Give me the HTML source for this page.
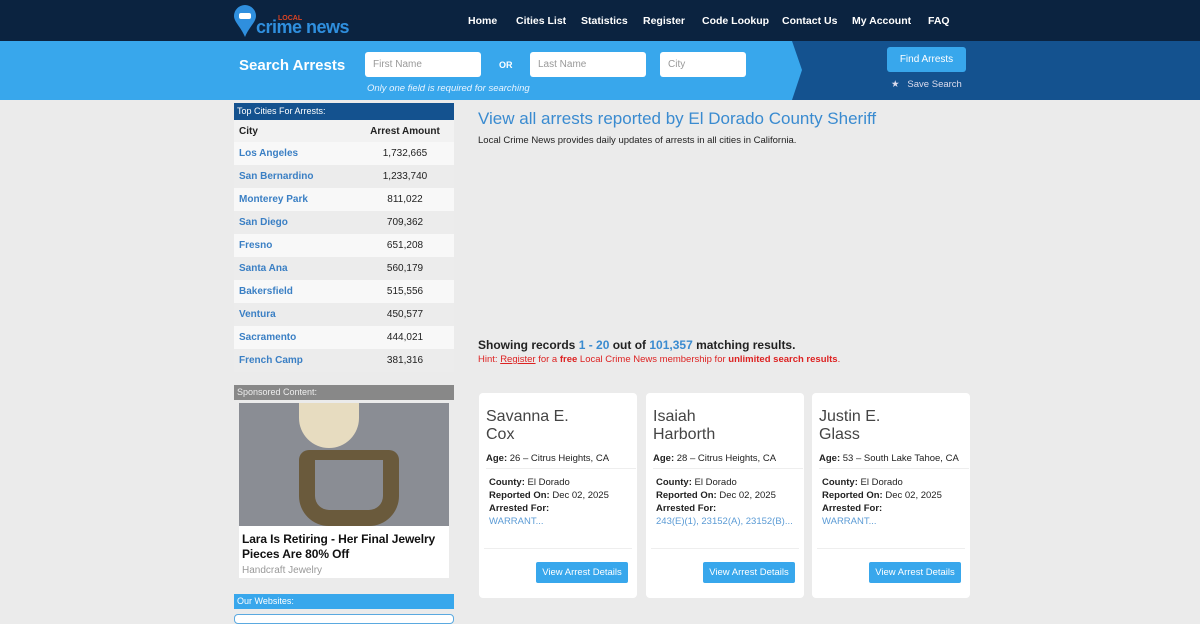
<!DOCTYPE html>
<html><head><style>
*{box-sizing:border-box;margin:0;padding:0}
body{width:1200px;height:620px;overflow:hidden;background:#ebebeb;font-family:"Liberation Sans",sans-serif;position:relative;font-size:11px;color:#222}
.hdr{position:absolute;left:0;top:0;width:1200px;height:41px;background:#0b2340}
.nav{position:absolute;top:15px;color:#fff;font-weight:bold;font-size:10.5px}
.sb{position:absolute;left:0;top:41px;width:1200px;height:59px;background:#14528f}
.sbl{position:absolute;left:0;top:41px;width:802px;height:59px;background:#38a7ec;clip-path:polygon(0 0,792px 0,802px 29px,792px 59px,0 59px)}
.in{position:absolute;top:52px;height:25px;background:#fff;border-radius:3px;color:#999;font-size:10px;padding:7px 8px}
.side{position:absolute;left:234px;top:103px;width:220px}
.row{height:23px;display:flex;align-items:center;font-size:10px}
.row .c{width:122px;padding-left:5px;color:#3a7fc4;font-weight:bold}
.row .n{width:98px;text-align:center}
.card{position:absolute;top:393px;width:158px;height:205px;background:#fff;border-radius:4px}
.card .nm{position:absolute;left:7px;top:15px;font-size:16px;color:#444;line-height:18px}
.card .age{position:absolute;left:7px;top:60px;font-size:9.5px;width:150px;border-bottom:1px solid #eee;padding-bottom:4px}
.card .inf{position:absolute;left:10px;top:83px;font-size:9.5px;line-height:13px}
.card .lk{color:#5b9bd5}
.card .ln{position:absolute;left:5px;right:5px;top:155px;border-top:1px solid #eee}
.card .bt{position:absolute;right:9px;top:169px;width:92px;height:21px;background:#38a7ec;color:#fff;font-size:9.5px;text-align:center;line-height:21px;border-radius:2px}
</style></head><body>
<div class="hdr">
<svg style="position:absolute;left:234px;top:5px" width="22" height="32" viewBox="0 0 22 32"><path d="M11 0a11 11 0 0 0-11 11c0 6 7 11 11 21 4-10 11-15 11-21A11 11 0 0 0 11 0z" fill="#2f8fde"/><rect x="5" y="8" width="12" height="6" rx="2" fill="#fff"/></svg>
<div style="position:absolute;left:278px;top:15px;color:#d42;font-size:7px;font-weight:bold">LOCAL</div>
<div style="position:absolute;left:256px;top:17px;color:#2f8fde;font-size:18px;font-weight:bold;letter-spacing:-0.5px">crime news</div>
<span class="nav" style="left:468px">Home</span><span class="nav" style="left:516px">Cities List</span><span class="nav" style="left:581px">Statistics</span><span class="nav" style="left:643px">Register</span><span class="nav" style="left:702px">Code Lookup</span><span class="nav" style="left:782px">Contact Us</span><span class="nav" style="left:852px">My Account</span><span class="nav" style="left:928px">FAQ</span>
</div>
<div class="sb"></div><div class="sbl"></div>
<div style="position:absolute;left:239px;top:57px;color:#fff;font-size:15px;font-weight:bold">Search Arrests</div>
<div class="in" style="left:365px;width:116px">First Name</div>
<div style="position:absolute;left:499px;top:60px;color:#fff;font-size:9px;font-weight:bold">OR</div>
<div class="in" style="left:530px;width:116px">Last Name</div>
<div class="in" style="left:660px;width:86px">City</div>
<div style="position:absolute;left:367px;top:83px;color:#e8f4ff;font-size:9.5px;font-style:italic">Only one field is required for searching</div>
<div style="position:absolute;left:887px;top:47px;width:79px;height:25px;background:#38a7ec;color:#fff;border-radius:3px;text-align:center;line-height:25px;font-size:10px">Find Arrests</div>
<div style="position:absolute;left:891px;top:79px;color:#dde;font-size:9.5px">★ &nbsp; Save Search</div>
<div class="side">
<div style="height:17px;background:#14528f;color:#fff;font-size:9px;padding:3px 3px">Top Cities For Arrests:</div>
<div class="row" style="background:#f2f2f2;height:22px;font-weight:bold"><span class="c" style="color:#222">City</span><span class="n" style="font-weight:bold">Arrest Amount</span></div>
<div class="row" style="background:#f8f8f8"><span class="c">Los Angeles</span><span class="n">1,732,665</span></div>
<div class="row" style="background:#ececec"><span class="c">San Bernardino</span><span class="n">1,233,740</span></div>
<div class="row" style="background:#f8f8f8"><span class="c">Monterey Park</span><span class="n">811,022</span></div>
<div class="row" style="background:#ececec"><span class="c">San Diego</span><span class="n">709,362</span></div>
<div class="row" style="background:#f8f8f8"><span class="c">Fresno</span><span class="n">651,208</span></div>
<div class="row" style="background:#ececec"><span class="c">Santa Ana</span><span class="n">560,179</span></div>
<div class="row" style="background:#f8f8f8"><span class="c">Bakersfield</span><span class="n">515,556</span></div>
<div class="row" style="background:#ececec"><span class="c">Ventura</span><span class="n">450,577</span></div>
<div class="row" style="background:#f8f8f8"><span class="c">Sacramento</span><span class="n">444,021</span></div>
<div class="row" style="background:#ececec"><span class="c">French Camp</span><span class="n">381,316</span></div>
</div>
<div style="position:absolute;left:234px;top:385px;width:220px;height:15px;background:#888;color:#eee;font-size:9px;padding:2px 3px">Sponsored Content:</div>
<div style="position:absolute;left:239px;top:403px;width:210px;height:123px;background:#8a8d94"></div>
<div style="position:absolute;left:299px;top:403px;width:60px;height:45px;background:#e7dcc0;border-radius:0 0 30px 30px"></div>
<div style="position:absolute;left:299px;top:450px;width:100px;height:76px;border:16px solid #6a5a3c;border-top-width:10px;border-radius:10px 10px 30px 30px"></div>
<div style="position:absolute;left:239px;top:526px;width:210px;height:52px;background:#fff;padding:6px 3px">
<div style="font-size:12px;font-weight:bold;line-height:15px;color:#111;letter-spacing:-0.1px">Lara Is Retiring - Her Final Jewelry Pieces Are 80% Off</div>
<div style="font-size:10px;color:#999;margin-top:3px">Handcraft Jewelry</div></div>
<div style="position:absolute;left:234px;top:594px;width:220px;height:15px;background:#38a7ec;color:#fff;font-size:9px;padding:2px 3px">Our Websites:</div>
<div style="position:absolute;left:234px;top:614px;width:220px;height:10px;border:1px solid #5aa9e0;border-radius:4px;background:#fff"></div>
<div style="position:absolute;left:478px;top:109px;font-size:17px;color:#3a8bd0">View all arrests reported by El Dorado County Sheriff</div>
<div style="position:absolute;left:478px;top:135px;font-size:9.5px">Local Crime News provides daily updates of arrests in all cities in California.</div>
<div style="position:absolute;left:478px;top:338px;font-size:12px;font-weight:bold">Showing records <span style="color:#3a8bd0">1 - 20</span> out of <span style="color:#3a8bd0">101,357</span> matching results.</div>
<div style="position:absolute;left:478px;top:354px;font-size:9.5px;color:#d22">Hint: <u>Register</u> for a <b>free</b> Local Crime News membership for <b>unlimited search results</b>.</div>
<div class="card" style="left:479px"><div class="nm">Savanna E.<br>Cox</div><div class="age"><b>Age:</b> 26 – Citrus Heights, CA</div><div class="inf"><b>County:</b> El Dorado<br><b>Reported On:</b> Dec 02, 2025<br><b>Arrested For:</b><br><span class="lk">WARRANT...</span></div><div class="ln"></div><div class="bt">View Arrest Details</div></div>
<div class="card" style="left:646px"><div class="nm">Isaiah<br>Harborth</div><div class="age"><b>Age:</b> 28 – Citrus Heights, CA</div><div class="inf"><b>County:</b> El Dorado<br><b>Reported On:</b> Dec 02, 2025<br><b>Arrested For:</b><br><span class="lk">243(E)(1), 23152(A), 23152(B)...</span></div><div class="ln"></div><div class="bt">View Arrest Details</div></div>
<div class="card" style="left:812px"><div class="nm">Justin E.<br>Glass</div><div class="age"><b>Age:</b> 53 – South Lake Tahoe, CA</div><div class="inf"><b>County:</b> El Dorado<br><b>Reported On:</b> Dec 02, 2025<br><b>Arrested For:</b><br><span class="lk">WARRANT...</span></div><div class="ln"></div><div class="bt">View Arrest Details</div></div>
</body></html>
